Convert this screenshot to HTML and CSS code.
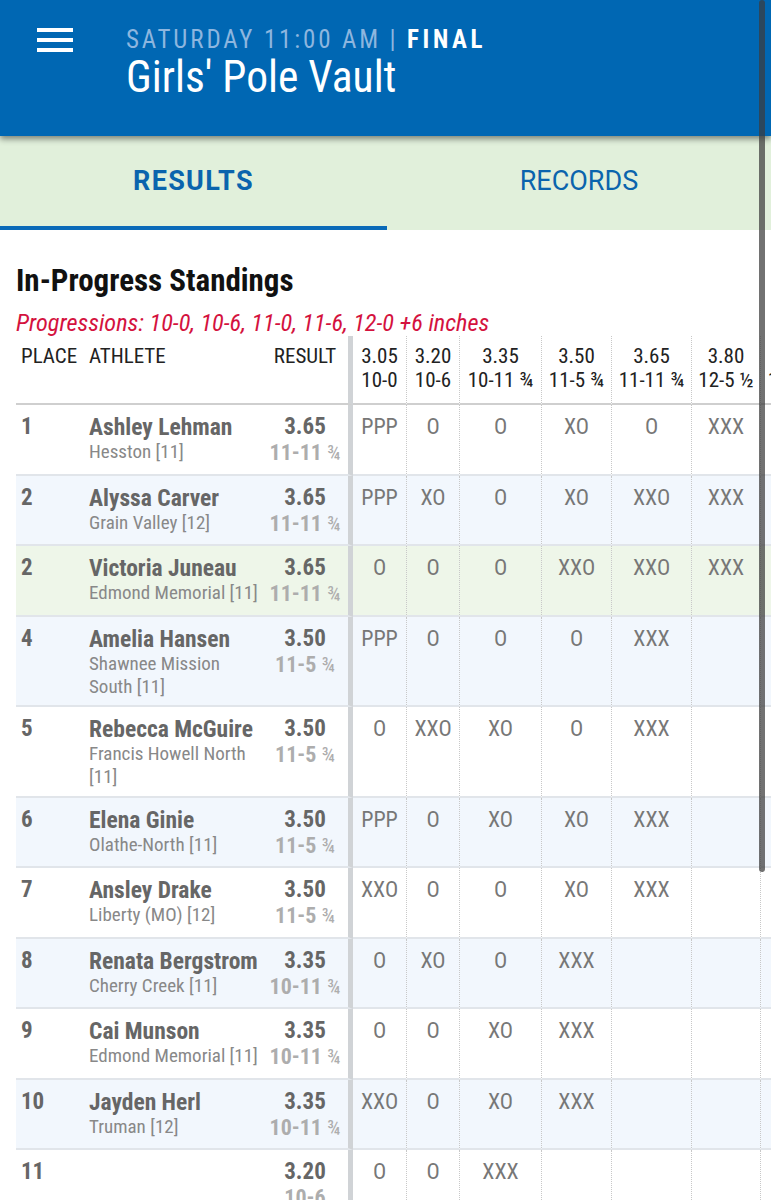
FILE: index.html
```html
<!DOCTYPE html>
<html>
<head>
<meta charset="utf-8">
<link rel="stylesheet" href="styles.css">
</head>
<body>
<header class="appbar">
  <div class="menu"><span></span><span></span><span></span></div>
  <div class="titles">
    <div class="meta">SATURDAY 11:00 AM | <b>FINAL</b></div>
    <h1 class="title">Girls' Pole Vault</h1>
  </div>
</header>
<nav class="tabs">
  <div class="tab active">RESULTS</div>
  <div class="tab">RECORDS</div>
</nav>
<main class="content">
  <h2 class="heading">In-Progress Standings</h2>
  <p class="prog">Progressions: 10-0, 10-6, 11-0, 11-6, 12-0 +6 inches</p>
  <div class="tablewrap">
  <table class="standings">
    <colgroup>
      <col class="c-place"><col class="c-ath"><col class="c-res">
      <col class="c-a1"><col class="c-a2"><col class="c-a3"><col class="c-a4"><col class="c-a5"><col class="c-a6"><col class="c-a7">
    </colgroup>
    <thead>
      <tr>
        <th class="place">PLACE</th>
        <th class="ath">ATHLETE</th>
        <th class="res">RESULT</th>
        <th class="att first">3.05<br>10-0</th>
        <th class="att">3.20<br>10-6</th>
        <th class="att">3.35<br>10-11 ¾</th>
        <th class="att">3.50<br>11-5 ¾</th>
        <th class="att">3.65<br>11-11 ¾</th>
        <th class="att">3.80<br>12-5 ½</th>
        <th class="att">3.95<br>12-11 ½</th>
      </tr>
    </thead>
    <tbody>
      <tr>
        <td class="place">1</td>
        <td class="ath"><div class="name">Ashley Lehman</div><div class="school">Hesston [11]</div></td>
        <td class="res"><div class="m">3.65</div><div class="imp">11-11 <span>¾</span></div></td>
        <td class="att first">PPP</td><td class="att">O</td><td class="att">O</td><td class="att">XO</td><td class="att">O</td><td class="att">XXX</td><td class="att"></td>
      </tr>
      <tr class="alt">
        <td class="place">2</td>
        <td class="ath"><div class="name">Alyssa Carver</div><div class="school">Grain Valley [12]</div></td>
        <td class="res"><div class="m">3.65</div><div class="imp">11-11 <span>¾</span></div></td>
        <td class="att first">PPP</td><td class="att">XO</td><td class="att">O</td><td class="att">XO</td><td class="att">XXO</td><td class="att">XXX</td><td class="att"></td>
      </tr>
      <tr class="hl">
        <td class="place">2</td>
        <td class="ath"><div class="name">Victoria Juneau</div><div class="school">Edmond Memorial [11]</div></td>
        <td class="res"><div class="m">3.65</div><div class="imp">11-11 <span>¾</span></div></td>
        <td class="att first">O</td><td class="att">O</td><td class="att">O</td><td class="att">XXO</td><td class="att">XXO</td><td class="att">XXX</td><td class="att"></td>
      </tr>
      <tr class="alt">
        <td class="place">4</td>
        <td class="ath"><div class="name">Amelia Hansen</div><div class="school">Shawnee Mission South [11]</div></td>
        <td class="res"><div class="m">3.50</div><div class="imp">11-5 <span>¾</span></div></td>
        <td class="att first">PPP</td><td class="att">O</td><td class="att">O</td><td class="att">O</td><td class="att">XXX</td><td class="att"></td><td class="att"></td>
      </tr>
      <tr>
        <td class="place">5</td>
        <td class="ath"><div class="name">Rebecca McGuire</div><div class="school">Francis Howell North [11]</div></td>
        <td class="res"><div class="m">3.50</div><div class="imp">11-5 <span>¾</span></div></td>
        <td class="att first">O</td><td class="att">XXO</td><td class="att">XO</td><td class="att">O</td><td class="att">XXX</td><td class="att"></td><td class="att"></td>
      </tr>
      <tr class="alt">
        <td class="place">6</td>
        <td class="ath"><div class="name">Elena Ginie</div><div class="school">Olathe-North [11]</div></td>
        <td class="res"><div class="m">3.50</div><div class="imp">11-5 <span>¾</span></div></td>
        <td class="att first">PPP</td><td class="att">O</td><td class="att">XO</td><td class="att">XO</td><td class="att">XXX</td><td class="att"></td><td class="att"></td>
      </tr>
      <tr>
        <td class="place">7</td>
        <td class="ath"><div class="name">Ansley Drake</div><div class="school">Liberty (MO) [12]</div></td>
        <td class="res"><div class="m">3.50</div><div class="imp">11-5 <span>¾</span></div></td>
        <td class="att first">XXO</td><td class="att">O</td><td class="att">O</td><td class="att">XO</td><td class="att">XXX</td><td class="att"></td><td class="att"></td>
      </tr>
      <tr class="alt">
        <td class="place">8</td>
        <td class="ath"><div class="name">Renata Bergstrom</div><div class="school">Cherry Creek [11]</div></td>
        <td class="res"><div class="m">3.35</div><div class="imp">10-11 <span>¾</span></div></td>
        <td class="att first">O</td><td class="att">XO</td><td class="att">O</td><td class="att">XXX</td><td class="att"></td><td class="att"></td><td class="att"></td>
      </tr>
      <tr>
        <td class="place">9</td>
        <td class="ath"><div class="name">Cai Munson</div><div class="school">Edmond Memorial [11]</div></td>
        <td class="res"><div class="m">3.35</div><div class="imp">10-11 <span>¾</span></div></td>
        <td class="att first">O</td><td class="att">O</td><td class="att">XO</td><td class="att">XXX</td><td class="att"></td><td class="att"></td><td class="att"></td>
      </tr>
      <tr class="alt">
        <td class="place">10</td>
        <td class="ath"><div class="name">Jayden Herl</div><div class="school">Truman [12]</div></td>
        <td class="res"><div class="m">3.35</div><div class="imp">10-11 <span>¾</span></div></td>
        <td class="att first">XXO</td><td class="att">O</td><td class="att">XO</td><td class="att">XXX</td><td class="att"></td><td class="att"></td><td class="att"></td>
      </tr>
      <tr>
        <td class="place">11</td>
        <td class="ath"><div class="name">&nbsp;</div><div class="school">&nbsp;</div></td>
        <td class="res"><div class="m">3.20</div><div class="imp">10-6</div></td>
        <td class="att first">O</td><td class="att">O</td><td class="att">XXX</td><td class="att"></td><td class="att"></td><td class="att"></td><td class="att"></td>
      </tr>
    </tbody>
  </table>
  </div>
</main>
<div class="scrollbar"></div>
</body>
</html>
```
FILE: styles.css
```css
html, body {
  margin: 0;
  padding: 0;
  background: #ffffff;
}
body {
  width: 771px;
  height: 1200px;
  overflow: hidden;
  position: relative;
  font-family: "Roboto Condensed", "Roboto", "Liberation Sans", sans-serif;
  font-stretch: 87.5%;
  color: #222;
}

.appbar {
  position: relative;
  z-index: 2;
  height: 136px;
  background: #0067b3;
  display: flex;
  align-items: flex-start;
  box-shadow: 0 3px 6px rgba(0, 0, 0, 0.45);
}
.menu {
  margin: 28px 0 0 37px;
  width: 36px;
  display: flex;
  flex-direction: column;
  gap: 6px;
}
.menu span {
  display: block;
  height: 4px;
  background: #ffffff;
}
.titles {
  margin: 26px 0 0 53px;
}
.meta {
  font-size: 25px;
  line-height: 28px;
  letter-spacing: 2.85px;
  color: #8db6df;
  white-space: nowrap;
}
.meta b {
  color: #ffffff;
  font-weight: 700;
  letter-spacing: 3.6px;
}
.title {
  margin: 2px 0 0 0;
  font-size: 43.5px;
  line-height: 44px;
  font-weight: 400;
  color: #ffffff;
  white-space: nowrap;
}

.tabs {
  display: grid;
  grid-template-columns: 387px 1fr;
  height: 94px;
  background: #e1f0db;
}
.tab {
  display: flex;
  align-items: center;
  justify-content: center;
  font-family: "Roboto", sans-serif;
  font-stretch: 100%;
  font-size: 27px;
  color: #0a64ad;
  border-bottom: 4px solid transparent;
}
.tab.active {
  font-weight: 700;
  letter-spacing: 1.3px;
  border-bottom-color: #0a6ab8;
}

.content {
  padding-left: 16px;
}
.heading {
  margin: 34px 0 0 0;
  font-size: 31px;
  line-height: 34px;
  font-weight: 700;
  color: #111;
  white-space: nowrap;
}
.prog {
  margin: 12px 0 0 0;
  font-size: 24.3px;
  line-height: 26px;
  font-style: italic;
  color: #d4123e;
  white-space: nowrap;
}
.tablewrap {
  width: 755px;
  overflow: hidden;
}
.standings {
  table-layout: fixed;
  border-collapse: separate;
  border-spacing: 0;
  width: 824px;
}
.c-place { width: 70px; }
.c-ath { width: 176px; }
.c-res { width: 91px; }
.c-a1 { width: 53px; }
.c-a2 { width: 53px; }
.c-a3 { width: 82px; }
.c-a4 { width: 70px; }
.c-a5 { width: 80px; }
.c-a6 { width: 69px; }
.c-a7 { width: 80px; }

.standings th {
  font-weight: 400;
  font-size: 21px;
  line-height: 24px;
  color: #222;
  vertical-align: top;
  padding: 8px 0 11px 0;
  border-bottom: 2px solid #cfcfcf;
  white-space: nowrap;
}
.standings th.place, .standings td.place { text-align: left; padding-left: 5px; }
.standings th.ath, .standings td.ath { text-align: left; padding-left: 3px; }
.standings th.res, .standings td.res {
  text-align: center;
  border-right: 5px solid #d0d3d6;
}
.standings th.att, .standings td.att {
  text-align: center;
  border-left: 1px dotted #c8c8c8;
}
.standings th.att.first, .standings td.att.first {
  border-left: none;
}

.standings td {
  vertical-align: top;
  padding: 9px 0 7.5px 0;
  border-bottom: 2px solid #e1e5ea;
}
.standings tr.alt td { background: #f2f7fd; }
.standings tr.hl td { background: #eef6e9; }

.standings td.place {
  font-size: 23px;
  line-height: 26px;
  font-weight: 700;
  color: #666;
}
.name {
  font-size: 23.5px;
  line-height: 26px;
  font-weight: 700;
  color: #666;
  white-space: nowrap;
}
.school {
  font-size: 19px;
  line-height: 23px;
  color: #888;
  padding-right: 4px;
}
.m {
  font-size: 23px;
  line-height: 26px;
  font-weight: 700;
  color: #666;
}
.imp {
  font-size: 22px;
  line-height: 25px;
  font-weight: 700;
  color: #adadad;
  white-space: nowrap;
}
.imp span {
  font-weight: 400;
  font-size: 20px;
}
.standings td.att {
  font-size: 22px;
  line-height: 26px;
  color: #777;
}

.scrollbar {
  position: absolute;
  top: 0;
  left: 759px;
  width: 6px;
  height: 872px;
  background: rgba(60, 60, 60, 0.72);
  border-radius: 3px;
  z-index: 5;
}
```
